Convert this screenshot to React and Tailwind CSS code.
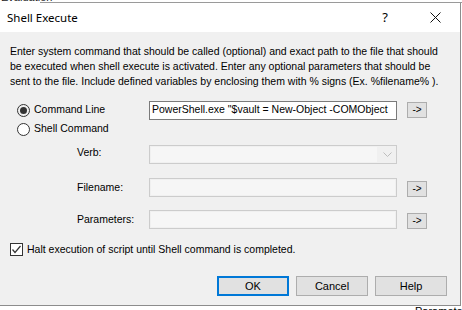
import React from 'react';

const ArrowButton = ({ mt = '' }) => (
  <div
    className={`ml-[10px] w-[20px] h-[16px] flex items-center justify-center bg-[#e1e1e1] border border-[#adadad] text-[10px] leading-none text-black ${mt}`}
  >
    -&gt;
  </div>
);

export default function App() {
  return (
    <div
      className="w-[462px] h-[310px] bg-white overflow-hidden text-[10.5px] text-black"
      style={{ fontFamily: '"Liberation Sans", Arial, sans-serif' }}
    >
      {/* window behind the dialog, cut at the top */}
      <div className="h-[2px] overflow-hidden">
        <div className="-mt-[8px] pl-[1px] text-[11px] leading-[11px] text-[#222]">Evaluation</div>
      </div>
      <div className="h-[1px] ml-[40px] bg-[#9a9a9a]" />

      <div className="flex">
        <div className="w-[461px] border-r border-b border-[#8c8c8c]">
          {/* title bar */}
          <div
            className="h-[29px] bg-white flex items-center pl-[7px] text-[11.5px]"
            style={{ fontFamily: '"Noto Sans", "Open Sans", sans-serif' }}
          >
            <span className="flex-1">Shell Execute</span>
            <span className="w-[12px] text-center mr-[39px] text-[13px]">?</span>
            <svg width="11" height="11" viewBox="0 0 11 11" className="mr-[19px]">
              <path d="M0.5 0.5 L10.5 10.5 M10.5 0.5 L0.5 10.5" stroke="#111" strokeWidth="1" />
            </svg>
          </div>

          {/* body */}
          <div className="h-[273px] bg-[#f0f0f0] pt-[12px]">
            <p className="pl-[10px] leading-[15px] whitespace-nowrap">
              Enter system command that should be called (optional) and exact path to the file that should
              <br />
              be executed when shell execute is activated. Enter any optional parameters that should be
              <br />
              sent to the file. Include defined variables by enclosing them with % signs (Ex. %filename% ).
            </p>

            {/* command line */}
            <div className="mt-[11px] h-[20px] flex items-center">
              <div className="ml-[17px] w-[13px] h-[13px] rounded-full border border-[#333] flex items-center justify-center">
                <div className="w-[7px] h-[7px] rounded-full bg-[#333]" />
              </div>
              <span className="ml-[4px] w-[115px]">Command Line</span>
              <div className="w-[248px] h-[19px] bg-white border border-[#7a7a7a] flex items-center pl-[2px] overflow-hidden whitespace-nowrap">
                PowerShell.exe "$vault = New-Object -COMObject
              </div>
              <ArrowButton />
            </div>

            {/* shell command */}
            <div className="h-[18px] flex items-center">
              <div className="ml-[17px] w-[13px] h-[13px] rounded-full border border-[#333] bg-white" />
              <span className="ml-[4px]">Shell Command</span>
            </div>

            {/* verb */}
            <div className="mt-[7px] h-[19px] flex items-center">
              <span className="ml-[77px] w-[72px] -mt-[4px]">Verb:</span>
              <div className="w-[248px] h-[19px] border border-[#cccccc] bg-[#f0f0f0] flex">
                <div className="flex-1 m-[1px] bg-[#f6f6f6]" />
                <div className="w-[18px] flex items-center justify-center">
                  <svg width="9" height="5" viewBox="0 0 9 5">
                    <path d="M0.5 0.5 L4.5 4.5 L8.5 0.5" stroke="#bdbdbd" strokeWidth="1" fill="none" />
                  </svg>
                </div>
              </div>
            </div>

            {/* filename */}
            <div className="mt-[14px] h-[19px] flex items-center">
              <span className="ml-[77px] w-[72px]">Filename:</span>
              <div className="w-[248px] h-[19px] border border-[#cccccc] bg-[#f0f0f0] flex">
                <div className="flex-1 m-[1px] bg-[#f6f6f6]" />
              </div>
              <ArrowButton mt="mt-[2px]" />
            </div>

            {/* parameters */}
            <div className="mt-[13px] h-[19px] flex items-center">
              <span className="ml-[77px] w-[72px]">Parameters:</span>
              <div className="w-[248px] h-[19px] border border-[#cccccc] bg-[#f0f0f0] flex">
                <div className="flex-1 m-[1px] bg-[#f6f6f6]" />
              </div>
              <ArrowButton mt="mt-[2px]" />
            </div>

            {/* halt checkbox */}
            <div className="mt-[12px] h-[17px] flex items-center">
              <div className="ml-[10px] w-[13px] h-[13px] border border-[#333] bg-white flex items-center justify-center">
                <svg width="11" height="11" viewBox="0 0 11 11">
                  <path d="M1.5 5.5 L4 8.5 L9.5 2" stroke="#333" strokeWidth="1.2" fill="none" />
                </svg>
              </div>
              <span className="ml-[4px]">Halt execution of script until Shell command is completed.</span>
            </div>

            {/* buttons */}
            <div className="mt-[18px] flex justify-end gap-[7px] pr-[13px] text-[11px]">
              <div className="w-[72px] h-[20px] border-2 border-[#0078d7] bg-[#e1e1e1] flex items-center justify-center">OK</div>
              <div className="w-[72px] h-[20px] border border-[#adadad] bg-[#e1e1e1] flex items-center justify-center">Cancel</div>
              <div className="w-[72px] h-[20px] border border-[#adadad] bg-[#e1e1e1] flex items-center justify-center">Help</div>
            </div>
          </div>
        </div>
      </div>

      {/* window behind, cut at the bottom */}
      <div className="flex h-[4px] overflow-hidden">
        <div className="ml-[403px] w-[1px] bg-[#8c8c8c]" />
        <div className="ml-[12px] text-[11px] leading-[11px]">Parameters</div>
      </div>
    </div>
  );
}
